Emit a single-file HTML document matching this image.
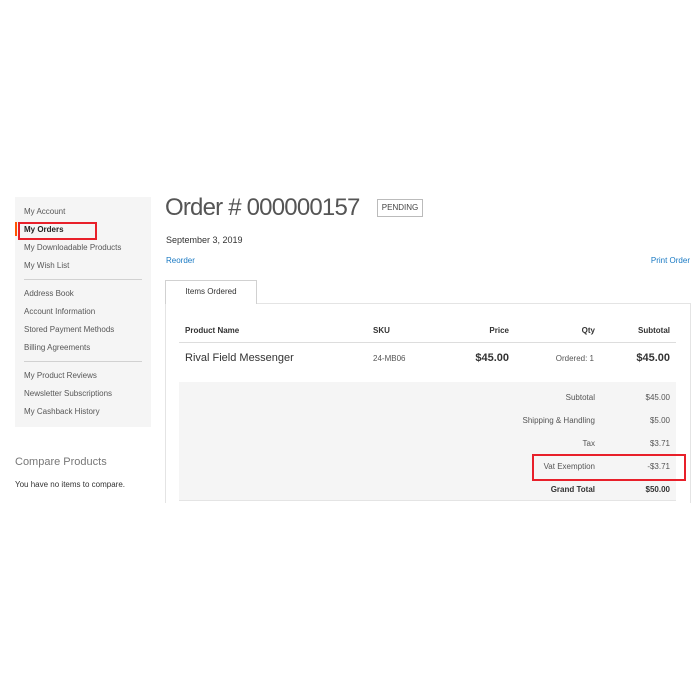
<!DOCTYPE html>
<html><head><style>
*{margin:0;padding:0;box-sizing:border-box}
body{width:700px;height:700px;background:#fff;font-family:"Liberation Sans",sans-serif;color:#333;position:relative;overflow:hidden}
.a{position:absolute;white-space:nowrap}
.s{font-size:8px;color:#575757;left:24px}
.r{text-align:right}
</style></head><body>
<div class="a" style="left:15px;top:197px;width:136px;height:230px;background:#f5f5f5"></div>
<div class="a" style="left:15px;top:222px;width:2px;height:14px;background:#ff5501"></div>
<div class="a s" style="top:207px">My Account</div>
<div class="a s" style="top:225px;color:#222;font-weight:bold">My Orders</div>
<div class="a s" style="top:243px">My Downloadable Products</div>
<div class="a s" style="top:261px">My Wish List</div>
<div class="a" style="left:24px;top:279px;width:118px;height:1px;background:#d1d1d1"></div>
<div class="a s" style="top:289px">Address Book</div>
<div class="a s" style="top:307px">Account Information</div>
<div class="a s" style="top:325px">Stored Payment Methods</div>
<div class="a s" style="top:343px">Billing Agreements</div>
<div class="a" style="left:24px;top:361px;width:118px;height:1px;background:#d1d1d1"></div>
<div class="a s" style="top:371px">My Product Reviews</div>
<div class="a s" style="top:389px">Newsletter Subscriptions</div>
<div class="a s" style="top:407px">My Cashback History</div>
<div class="a" style="left:18px;top:222px;width:79px;height:18px;border:2px solid #e8202a"></div>
<div class="a" style="left:15px;top:456px;font-size:11px;color:#777">Compare Products</div>
<div class="a" style="left:15px;top:480px;font-size:8px">You have no items to compare.</div>

<div class="a" style="left:165px;top:194px;font-size:24px;letter-spacing:-0.8px;color:#555">Order # 000000157</div>
<div class="a" style="left:377px;top:199px;width:46px;height:18px;border:1px solid #bbb;font-size:8px;line-height:16px;text-align:center;color:#444">PENDING</div>
<div class="a" style="left:166px;top:235px;font-size:9px">September 3, 2019</div>
<div class="a" style="left:166px;top:256px;font-size:8px;color:#1979c3">Reorder</div>
<div class="a" style="right:10px;top:256px;font-size:8px;color:#1979c3">Print Order</div>

<div class="a" style="left:165px;top:303px;width:526px;height:200px;border:1px solid #e4e4e4;border-bottom:none"></div>
<div class="a" style="left:165px;top:280px;width:92px;height:24px;border:1px solid #d1d1d1;border-bottom:none;background:#fff;font-size:8px;text-align:center;line-height:22px">Items Ordered</div>

<div class="a" style="left:185px;top:326px;font-size:8px;font-weight:bold">Product Name</div>
<div class="a" style="left:373px;top:326px;font-size:8px;font-weight:bold">SKU</div>
<div class="a r" style="right:191px;top:326px;font-size:8px;font-weight:bold">Price</div>
<div class="a r" style="right:105px;top:326px;font-size:8px;font-weight:bold">Qty</div>
<div class="a r" style="right:30px;top:326px;font-size:8px;font-weight:bold">Subtotal</div>
<div class="a" style="left:179px;top:342px;width:497px;height:1px;background:#ddd"></div>
<div class="a" style="left:185px;top:352px;font-size:11px">Rival Field Messenger</div>
<div class="a" style="left:373px;top:354px;font-size:8px;color:#555">24-MB06</div>
<div class="a r" style="right:191px;top:352px;font-size:11px;font-weight:bold">$45.00</div>
<div class="a r" style="right:106px;top:354px;font-size:8px;color:#555">Ordered: 1</div>
<div class="a r" style="right:30px;top:352px;font-size:11px;font-weight:bold">$45.00</div>

<div class="a" style="left:179px;top:382px;width:497px;height:119px;background:#f5f5f5;border-bottom:1px solid #e4e4e4"></div>
<div class="a r" style="right:105px;top:393px;font-size:8px;color:#555">Subtotal</div>
<div class="a r" style="right:30px;top:393px;font-size:8px;color:#555">$45.00</div>
<div class="a r" style="right:105px;top:416px;font-size:8px;color:#555">Shipping &amp; Handling</div>
<div class="a r" style="right:30px;top:416px;font-size:8px;color:#555">$5.00</div>
<div class="a r" style="right:105px;top:439px;font-size:8px;color:#555">Tax</div>
<div class="a r" style="right:30px;top:439px;font-size:8px;color:#555">$3.71</div>
<div class="a r" style="right:105px;top:462px;font-size:8px;color:#555">Vat Exemption</div>
<div class="a r" style="right:30px;top:462px;font-size:8px;color:#555">-$3.71</div>
<div class="a r" style="right:105px;top:485px;font-size:8px;font-weight:bold">Grand Total</div>
<div class="a r" style="right:30px;top:485px;font-size:8px;font-weight:bold">$50.00</div>
<div class="a" style="left:532px;top:454px;width:154px;height:27px;border:2px solid #e8202a"></div>
</body></html>
